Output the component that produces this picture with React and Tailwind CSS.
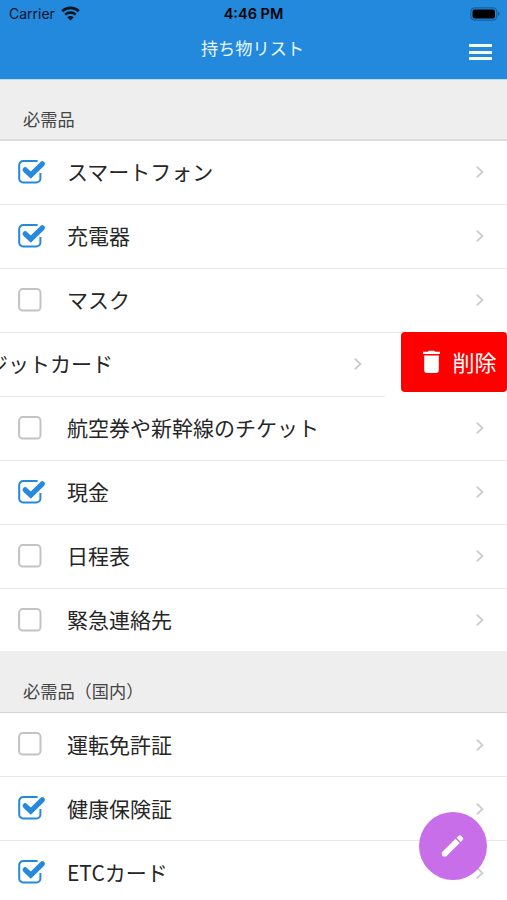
const essentials = [
  { label: 'スマートフォン', checked: true },
  { label: '充電器', checked: true },
  { label: 'マスク' },
  { label: 'クレジットカード', swiped: true },
  { label: '航空券や新幹線のチケット' },
  { label: '現金', checked: true },
  { label: '日程表' },
  { label: '緊急連絡先' },
];

const domestic = [
  { label: '運転免許証' },
  { label: '健康保険証', checked: true },
  { label: 'ETCカード', checked: true },
];

function Checkbox({ checked }) {
  return (
    <svg className="h-[28px] w-[30px] shrink-0" viewBox="0 0 30 28" fill="none">
      {checked ? (
        <>
          <path d="M20.6 3.1H6.2A4 4 0 0 0 2.2 7.1V20.4A4 4 0 0 0 6.2 24.4H19.4A4 4 0 0 0 23.4 20.4V15" stroke="#2589dc" strokeWidth="2" />
          <path d="M8.2 11.8L13.8 17.2L25.3 5.8" stroke="#2589dc" strokeWidth="5.2" strokeLinecap="round" />
        </>
      ) : (
        <rect x="2.1" y="3.1" width="21.4" height="21.4" rx="3.6" stroke="#c3c3c3" strokeWidth="2" />
      )}
    </svg>
  );
}

function Chevron() {
  return (
    <svg className="h-[14px] w-[10px] shrink-0" viewBox="0 0 10 14" fill="none">
      <path d="M1.8 1.6L7.5 7L1.8 12.4" stroke="#cbcbcb" strokeWidth="1.8" />
    </svg>
  );
}

function DeleteButton() {
  return (
    <button className="absolute -top-px right-0 flex h-[60px] w-[106.5px] items-center rounded-[4px] bg-[#ff0000] pl-[21px] text-white">
      <svg className="h-[24px] w-[19px] shrink-0" viewBox="0 0 19 24" fill="currentColor">
        <path d="M1 1.7H5.8L6.8 .7H12.2L13.2 1.7H18V4.1H1ZM2.2 5.4H16.8V20.5A2.4 2.4 0 0 1 14.4 22.9H4.6A2.4 2.4 0 0 1 2.2 20.5Z" />
      </svg>
      <span className="ml-[12px] pb-[2px] text-[22px] leading-none">削除</span>
    </button>
  );
}

function Row({ label, checked, swiped, last, tight }) {
  const contentHeight = tight ? 'h-[61px]' : 'h-[63px]';
  return (
    <li className={`relative shrink-0 bg-white ${last ? 'h-[62px]' : 'h-16'}`}>
      <div
        className={`flex h-full items-start border-[#e9e9e9] pr-[22px] pl-[17px] ${last ? '' : 'border-b'} ${swiped ? '-translate-x-[122px]' : ''}`}
      >
        <div className="flex h-[61px] w-[50px] items-center">
          <Checkbox checked={checked} />
        </div>
        <span className={`flex flex-1 items-center text-[21px] leading-none whitespace-nowrap text-[#262626] ${contentHeight}`}>{label}</span>
        <div className={`flex items-center ${contentHeight}`}>
          <Chevron />
        </div>
      </div>
      {swiped && <DeleteButton />}
    </li>
  );
}

function SectionHeader({ title, className }) {
  return (
    <h2 className={`flex shrink-0 items-end bg-[#eeeeee] pl-[23px] text-[17.2px] leading-[17px] text-[#444444] ${className}`}>
      {title}
    </h2>
  );
}

function Section({ title, headerClass, items, tight }) {
  return (
    <section>
      <SectionHeader title={title} className={headerClass} />
      <ul>
        {items.map((item, i) => (
          <Row key={item.label} {...item} tight={tight} last={tight && i === items.length - 1} />
        ))}
      </ul>
    </section>
  );
}

export default function App() {
  return (
    <div className="relative h-[900px] w-[507px] overflow-hidden bg-white font-['Noto_Sans_CJK_JP',sans-serif]">
      <header className="h-[79px] bg-[#2389dc]">
        <div className="grid h-[27px] grid-cols-3 items-center pr-[7px] pl-[9px] font-[Inter,sans-serif] text-[#07131f]">
          <div className="flex items-center gap-[6px]">
            <span className="text-[14px] leading-none">Carrier</span>
            <svg className="h-[15px] w-[19px]" viewBox="0 0 19 15" fill="none" stroke="currentColor">
              <path d="M1.2 5.2C5.8 .7 13.2 .7 17.8 5.2" strokeWidth="2.6" />
              <path d="M4.2 8.6C7.2 5.8 11.8 5.8 14.8 8.6" strokeWidth="2.5" />
              <path d="M6.3 11.2C8.1 9.6 10.9 9.6 12.7 11.2L9.5 14.4Z" fill="currentColor" stroke="none" />
            </svg>
          </div>
          <span className="pt-[2px] pr-[2px] text-center text-[14.5px] leading-none font-semibold text-black">4:46 PM</span>
          <div className="flex justify-end">
            <svg className="h-[14px] w-[30px]" viewBox="0 0 30 14" fill="none">
              <rect x=".8" y=".8" width="26" height="12.4" rx="4" stroke="#17609b" strokeWidth="1.2" />
              <rect x="2.5" y="2.4" width="22.5" height="9.2" rx="2.4" fill="#000000" />
              <path d="M28 4.8C30 5.4 30 8.6 28 9.2Z" fill="#17609b" />
            </svg>
          </div>
        </div>
        <div className="relative flex h-[42px] items-center justify-center pr-[2px]">
          <h1 className="text-[17.2px] leading-none text-[#e9f7ff]">持ち物リスト</h1>
          <button className="absolute top-[17px] right-[15.5px] flex flex-col gap-[3.6px]">
            <span className="h-[3px] w-[23px] bg-[#f2fbff]" />
            <span className="h-[3px] w-[23px] bg-[#f2fbff]" />
            <span className="h-[3px] w-[23px] bg-[#f2fbff]" />
          </button>
        </div>
      </header>
      <main>
        <Section title="必需品" headerClass="h-[62px] border-t border-b-2 border-t-[#b5dcf7] border-b-[#dddddd] pb-[12px]" items={essentials} tight />
        <Section title="必需品（国内）" headerClass="h-[62px] border-b border-[#d3d3d3] pb-[13px]" items={domestic} />
      </main>
      <button className="absolute top-[812px] left-[419px] flex size-[68px] items-center justify-center rounded-full bg-[#c76ee8] text-white">
        <svg className="size-[24px]" viewBox="0 0 24 24" fill="currentColor">
          <path d="M.9 18.2L14.5 4.8L18.7 9L5.1 22.5H2.2L.9 21.2ZM15.6 3.7L17.5 1.8A1.7 1.7 0 0 1 19.9 1.8L21.7 3.6A1.7 1.7 0 0 1 21.7 6L19.8 7.9Z" />
        </svg>
      </button>
    </div>
  );
}
